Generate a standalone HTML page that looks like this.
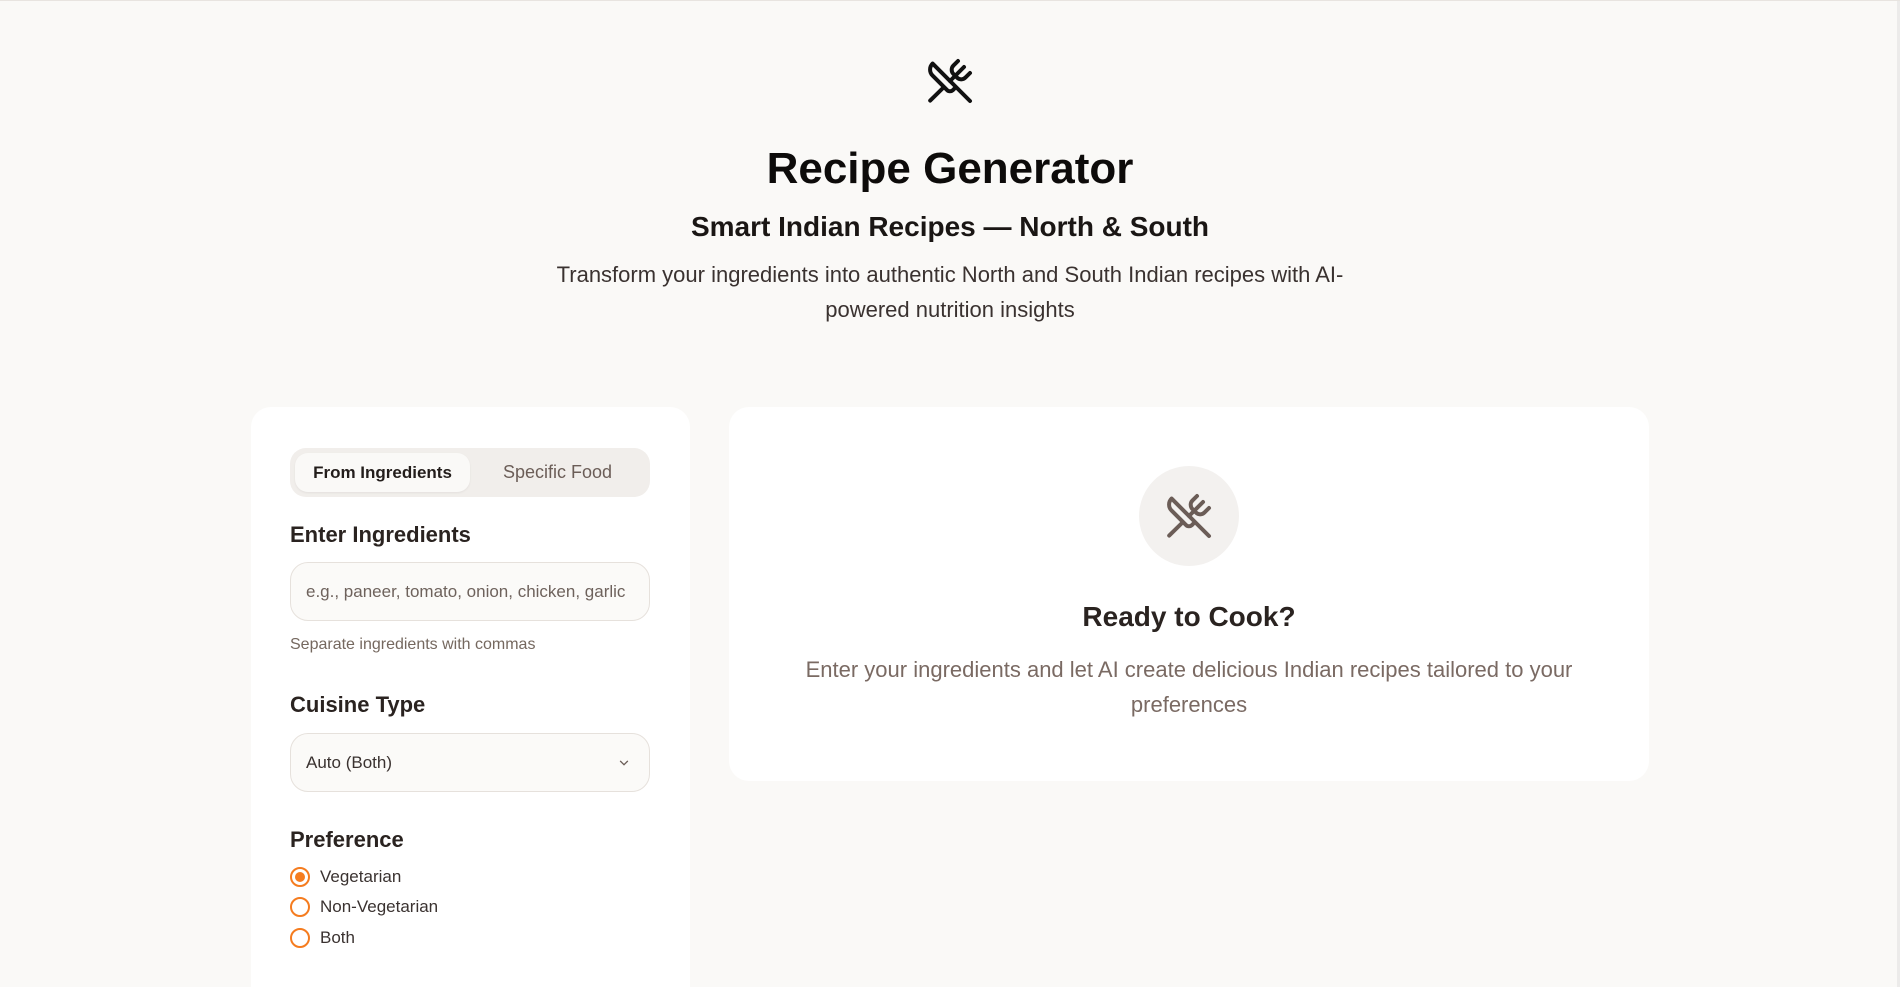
<!DOCTYPE html>
<html style="height:987px;overflow:hidden"><head><meta charset="utf-8"><style>
*{box-sizing:border-box;margin:0;padding:0}
body{width:1900px;height:987px;overflow:hidden;background:#faf9f7;font-family:"Liberation Sans",sans-serif;color:#1a1614;position:relative;border-top:1px solid #e8e4e0}
.c{position:absolute;left:0;width:1900px;text-align:center}
.card{position:absolute;background:#fff;border-radius:20px}
.lbl{position:absolute;left:290px;font-size:22px;font-weight:600;color:#2a2320}
.field{position:absolute;left:290px;width:360px;height:59px;border:1px solid #e6e1dc;border-radius:18px;background:#fbfaf8;font-size:17px;color:#6e625c;padding-left:15px;line-height:57px}
.radio{position:absolute;left:290px;font-size:17px;color:#3a3230;line-height:20px}
.radio i{position:absolute;left:0;top:0;width:20px;height:20px;border:2px solid #f57c1f;border-radius:50%}
.radio span{position:absolute;left:30px;white-space:nowrap}
</style></head><body>
<div style="position:absolute;left:1897px;top:0;width:3px;height:987px;background:#ecebea"></div>
<svg style="position:absolute;left:926px;top:56px" width="48" height="48" viewBox="0 0 24 24" fill="none" stroke="#111" stroke-width="2" stroke-linecap="round" stroke-linejoin="round"><path d="m16 2-2.3 2.3a3 3 0 0 0 0 4.2l1.8 1.8a3 3 0 0 0 4.2 0L22 8"/><path d="M15 15 3.3 3.3a4.2 4.2 0 0 0 0 6l7.3 7.3c.7.7 2 .7 2.8 0L15 15Zm0 0 7 7"/><path d="m2.1 21.8 6.4-6.3"/><path d="m19 5-7 7"/></svg>
<div class="c" style="top:143px;font-size:44px;font-weight:700;color:#0d0b0a">Recipe Generator</div>
<div class="c" style="top:210px;font-size:28px;font-weight:600;color:#1a1614">Smart Indian Recipes — North &amp; South</div>
<div class="c" style="top:256px;font-size:22px;line-height:35px;color:#3a3230"><div style="width:840px;margin:0 auto">Transform your ingredients into authentic North and South Indian recipes with AI-powered nutrition insights</div></div>

<div class="card" style="left:251px;top:406px;width:439px;height:581px;border-radius:20px 20px 0 0"></div>
<div style="position:absolute;left:290px;top:447px;width:360px;height:49px;background:#f1eeeb;border-radius:16px"></div>
<div style="position:absolute;left:295px;top:452px;width:175px;height:39px;background:#faf9f7;border-radius:13px;box-shadow:0 1px 2px rgba(0,0,0,.06);text-align:center;line-height:39px;font-size:17px;font-weight:600;color:#231d1b">From Ingredients</div>
<div style="position:absolute;left:470px;top:452px;width:175px;height:39px;text-align:center;line-height:39px;font-size:18px;color:#6b5d57">Specific Food</div>
<div class="lbl" style="top:521px">Enter Ingredients</div>
<div class="field" style="top:561px">e.g., paneer, tomato, onion, chicken, garlic</div>
<div style="position:absolute;left:290px;top:635px;font-size:16px;color:#75685f">Separate ingredients with commas</div>
<div class="lbl" style="top:691px">Cuisine Type</div>
<div class="field" style="top:732px;color:#3a3230">Auto (Both)
<svg style="position:absolute;right:18px;top:22px" width="14" height="14" viewBox="0 0 24 24" fill="none" stroke="#6b5d57" stroke-width="2.2" stroke-linecap="round"><path d="m6 9 6 6 6-6"/></svg></div>
<div class="lbl" style="top:826px">Preference</div>
<div class="radio" style="top:866px"><i style="border-color:#f57c1f"><b style="position:absolute;left:3px;top:3px;width:10px;height:10px;border-radius:50%;background:#f57c1f"></b></i><span>Vegetarian</span></div>
<div class="radio" style="top:896px"><i></i><span>Non-Vegetarian</span></div>
<div class="radio" style="top:927px"><i></i><span>Both</span></div>

<div class="card" style="left:729px;top:406px;width:920px;height:374px"></div>
<div style="position:absolute;left:1139px;top:465px;width:100px;height:100px;border-radius:50%;background:#f3f1ef"></div>
<svg style="position:absolute;left:1165px;top:491px" width="48" height="48" viewBox="0 0 24 24" fill="none" stroke="#6b5d57" stroke-width="2" stroke-linecap="round" stroke-linejoin="round"><path d="m16 2-2.3 2.3a3 3 0 0 0 0 4.2l1.8 1.8a3 3 0 0 0 4.2 0L22 8"/><path d="M15 15 3.3 3.3a4.2 4.2 0 0 0 0 6l7.3 7.3c.7.7 2 .7 2.8 0L15 15Zm0 0 7 7"/><path d="m2.1 21.8 6.4-6.3"/><path d="m19 5-7 7"/></svg>
<div style="position:absolute;left:729px;width:920px;top:600px;text-align:center;font-size:28px;font-weight:600;color:#2a2320">Ready to Cook?</div>
<div style="position:absolute;left:779px;width:820px;top:651px;text-align:center;font-size:22px;line-height:35px;color:#7a6a63">Enter your ingredients and let AI create delicious Indian recipes tailored to your preferences</div>
</body></html>
